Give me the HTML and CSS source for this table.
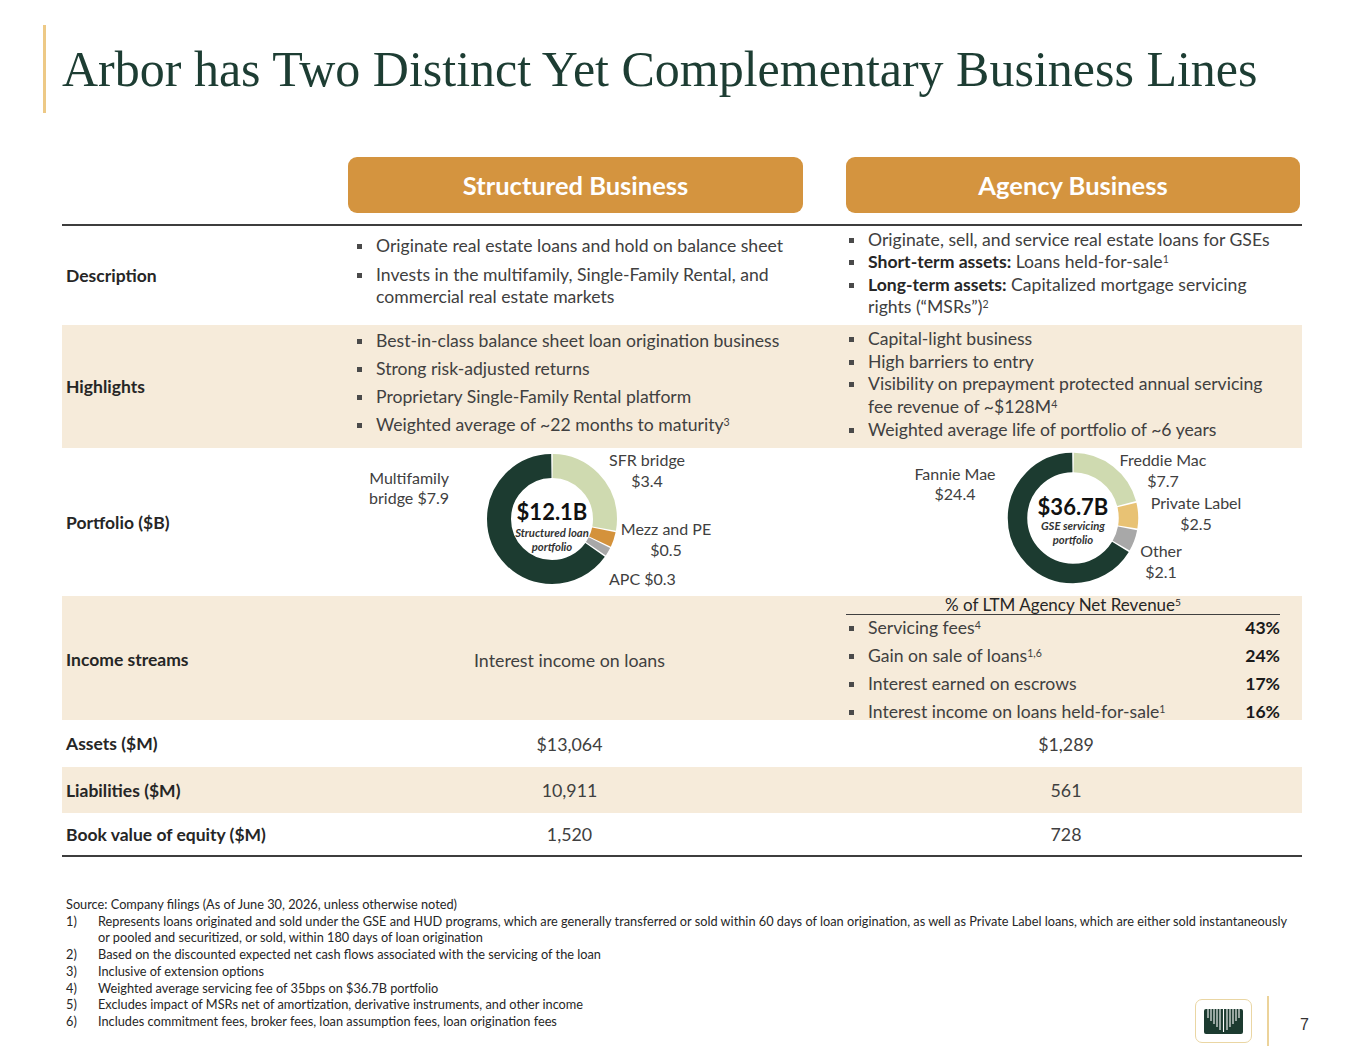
FILE: index.html
```html
<!DOCTYPE html>
<html lang="en">
<head>
<meta charset="utf-8">
<title>Arbor has Two Distinct Yet Complementary Business Lines</title>
<link rel="stylesheet" href="styles.css">
</head>
<body>
<div class="page">
  <header class="titlebar">
    <div class="accent"></div>
    <h1 class="title">Arbor has Two Distinct Yet Complementary Business Lines</h1>
  </header>

  <div class="pills">
    <div class="pill pill-a">Structured Business</div>
    <div class="pill pill-b">Agency Business</div>
  </div>

  <div class="table">
    <div class="row row-desc">
      <div class="label">Description</div>
      <ul class="list list-left spaced">
        <li>Originate real estate loans and hold on balance sheet</li>
        <li>Invests in the multifamily, Single-Family Rental, and commercial real estate markets</li>
      </ul>
      <ul class="list list-right">
        <li>Originate, sell, and service real estate loans for GSEs</li>
        <li><b>Short-term assets:</b> Loans held-for-sale<sup>1</sup></li>
        <li><b>Long-term assets:</b> Capitalized mortgage servicing rights (“MSRs”)<sup>2</sup></li>
      </ul>
    </div>

    <div class="row row-high shade">
      <div class="label">Highlights</div>
      <ul class="list list-left spaced2">
        <li>Best-in-class balance sheet loan origination business</li>
        <li>Strong risk-adjusted returns</li>
        <li>Proprietary Single-Family Rental platform</li>
        <li>Weighted average of ~22 months to maturity<sup>3</sup></li>
      </ul>
      <ul class="list list-right">
        <li>Capital-light business</li>
        <li>High barriers to entry</li>
        <li>Visibility on prepayment protected annual servicing fee revenue of ~$128M<sup>4</sup></li>
        <li>Weighted average life of portfolio of ~6 years</li>
      </ul>
    </div>

    <div class="row row-port">
      <div class="label">Portfolio ($B)</div>
      <div class="chart chart-left">
        <svg width="455" height="148" viewBox="0 0 455 148">
          <g transform="rotate(-90 204 71)" fill="none" stroke-width="24">
            <circle cx="204" cy="71" r="53" pathLength="100" stroke="#cfdab0" stroke-dasharray="27.7 72.3" stroke-dashoffset="-0.2"/>
            <circle cx="204" cy="71" r="53" pathLength="100" stroke="#d4923b" stroke-dasharray="3.7 96.3" stroke-dashoffset="-28.3"/>
            <circle cx="204" cy="71" r="53" pathLength="100" stroke="#a8a8a8" stroke-dasharray="2.1 97.9" stroke-dashoffset="-32.4"/>
            <circle cx="204" cy="71" r="53" pathLength="100" stroke="#1c3b30" stroke-dasharray="64.9 35.1" stroke-dashoffset="-34.9"/>
          </g>
          <text class="lbl" x="101" y="36" text-anchor="end">Multifamily</text>
          <text class="lbl" x="101" y="56" text-anchor="end">bridge $7.9</text>
          <text class="lbl" x="299" y="18" text-anchor="middle">SFR bridge</text>
          <text class="lbl" x="299" y="39" text-anchor="middle">$3.4</text>
          <text class="lbl" x="318" y="87" text-anchor="middle">Mezz and PE</text>
          <text class="lbl" x="318" y="108" text-anchor="middle">$0.5</text>
          <text class="lbl" x="261" y="137">APC $0.3</text>
          <text class="big" x="204" y="72" text-anchor="middle">$12.1B</text>
          <text class="cap" x="204" y="89" text-anchor="middle">Structured loan</text>
          <text class="cap" x="204" y="103" text-anchor="middle">portfolio</text>
        </svg>
      </div>
      <div class="chart chart-right">
        <svg width="454" height="148" viewBox="0 0 454 148">
          <g transform="rotate(-90 227 70)" fill="none" stroke-width="19.5">
            <circle cx="227" cy="70" r="55.5" pathLength="100" stroke="#cfdab0" stroke-dasharray="20.6 79.4" stroke-dashoffset="-0.2"/>
            <circle cx="227" cy="70" r="55.5" pathLength="100" stroke="#e8c274" stroke-dasharray="6.4 93.6" stroke-dashoffset="-21.2"/>
            <circle cx="227" cy="70" r="55.5" pathLength="100" stroke="#a8a8a8" stroke-dasharray="5.3 94.7" stroke-dashoffset="-28"/>
            <circle cx="227" cy="70" r="55.5" pathLength="100" stroke="#1c3b30" stroke-dasharray="66.1 33.9" stroke-dashoffset="-33.7"/>
          </g>
          <text class="lbl" x="109" y="32" text-anchor="middle">Fannie Mae</text>
          <text class="lbl" x="109" y="52" text-anchor="middle">$24.4</text>
          <text class="lbl" x="317" y="18" text-anchor="middle">Freddie Mac</text>
          <text class="lbl" x="317" y="39" text-anchor="middle">$7.7</text>
          <text class="lbl" x="350" y="61" text-anchor="middle">Private Label</text>
          <text class="lbl" x="350" y="82" text-anchor="middle">$2.5</text>
          <text class="lbl" x="315" y="109" text-anchor="middle">Other</text>
          <text class="lbl" x="315" y="130" text-anchor="middle">$2.1</text>
          <text class="big" x="227" y="67" text-anchor="middle">$36.7B</text>
          <text class="cap" x="227" y="82" text-anchor="middle">GSE servicing</text>
          <text class="cap" x="227" y="96" text-anchor="middle">portfolio</text>
        </svg>
      </div>
    </div>

    <div class="row row-inc shade">
      <div class="label">Income streams</div>
      <div class="value value-left">Interest income on loans</div>
      <div class="income">
        <div class="inc-head">% of LTM Agency Net Revenue<sup>5</sup></div>
        <ul class="list inc-list">
          <li><span>Servicing fees<sup>4</sup></span><b>43%</b></li>
          <li><span>Gain on sale of loans<sup>1,6</sup></span><b>24%</b></li>
          <li><span>Interest earned on escrows</span><b>17%</b></li>
          <li><span>Interest income on loans held-for-sale<sup>1</sup></span><b>16%</b></li>
        </ul>
      </div>
    </div>

    <div class="row row-small row-assets">
      <div class="label">Assets ($M)</div>
      <div class="value value-left">$13,064</div>
      <div class="value value-right">$1,289</div>
    </div>
    <div class="row row-small row-liab shade">
      <div class="label">Liabilities ($M)</div>
      <div class="value value-left">10,911</div>
      <div class="value value-right">561</div>
    </div>
    <div class="row row-small row-book">
      <div class="label">Book value of equity ($M)</div>
      <div class="value value-left">1,520</div>
      <div class="value value-right">728</div>
    </div>
  </div>

  <footer class="footer">
    <div class="notes">
      <p class="source">Source: Company filings (As of June 30, 2026, unless otherwise noted)</p>
      <ol class="fn">
        <li><span class="n">1)</span><span>Represents loans originated and sold under the GSE and HUD programs, which are generally transferred or sold within 60 days of loan origination, as well as Private Label loans, which are either sold instantaneously or pooled and securitized, or sold, within 180 days of loan origination</span></li>
        <li><span class="n">2)</span><span>Based on the discounted expected net cash flows associated with the servicing of the loan</span></li>
        <li><span class="n">3)</span><span>Inclusive of extension options</span></li>
        <li><span class="n">4)</span><span>Weighted average servicing fee of 35bps on $36.7B portfolio</span></li>
        <li><span class="n">5)</span><span>Excludes impact of MSRs net of amortization, derivative instruments, and other income</span></li>
        <li><span class="n">6)</span><span>Includes commitment fees, broker fees, loan assumption fees, loan origination fees</span></li>
      </ol>
    </div>
    <div class="brand">
      <div class="logo">
        <svg width="39" height="25" viewBox="0 0 39 25">
          <rect x="0" y="0" width="39" height="25" rx="2" fill="#1c3b30"/>
          <g stroke="#ffffff" stroke-width="1.1">
            <line x1="4" y1="0" x2="4" y2="9"/>
            <line x1="7" y1="0" x2="7" y2="12"/>
            <line x1="10" y1="0" x2="10" y2="15"/>
            <line x1="13" y1="0" x2="13" y2="18"/>
            <line x1="16" y1="0" x2="16" y2="21"/>
            <line x1="19.5" y1="0" x2="19.5" y2="23"/>
            <line x1="23" y1="0" x2="23" y2="21"/>
            <line x1="26" y1="0" x2="26" y2="18"/>
            <line x1="29" y1="0" x2="29" y2="15"/>
            <line x1="32" y1="0" x2="32" y2="12"/>
            <line x1="35" y1="0" x2="35" y2="9"/>
          </g>
        </svg>
      </div>
      <div class="divider"></div>
      <div class="pagenum">7</div>
    </div>
  </footer>
</div>
</body>
</html>
```

FILE: styles.css
```css
* { box-sizing: border-box; }
html, body { margin: 0; padding: 0; background: #ffffff; }
body {
  font-family: Lato, "Open Sans", "Liberation Sans", sans-serif;
  color: #404040;
}
.page {
  width: 1365px;
  height: 1055px;
  overflow: hidden;
  position: relative;
}

/* Title */
.titlebar {
  display: flex;
  align-items: flex-start;
  padding-top: 25px;
  padding-left: 43px;
}
.accent {
  width: 3px;
  height: 88px;
  background: #edc986;
  flex: none;
}
.title {
  margin: 0 0 0 16px;
  font-family: "Liberation Serif", "DejaVu Serif", serif;
  font-weight: normal;
  font-size: 50px;
  line-height: 88px;
  color: #1d3d33;
  white-space: nowrap;
}

/* Pills */
.pills,
.row {
  display: grid;
  grid-template-columns: 286px 455px 43px 456px;
}
.pills {
  margin: 44px 0 0 62px;
  width: 1240px;
}
.pill {
  height: 56px;
  border-radius: 9px;
  background: #d4943f;
  color: #ffffff;
  font-weight: bold;
  font-size: 25.5px;
  display: flex;
  align-items: center;
  justify-content: center;
}
.pill-a { grid-column: 2; }
.pill-b { grid-column: 4; width: 454px; }

/* Table */
.table {
  margin: 11px 0 0 62px;
  width: 1240px;
  border-top: 2px solid #3d3d3d;
  border-bottom: 2px solid #3d3d3d;
}
.row > :nth-child(3) { grid-column: 4; }
.shade { background: #f6ebda; }
.label {
  grid-column: 1;
  align-self: center;
  padding-left: 4px;
  font-weight: bold;
  font-size: 17.5px;
  color: #262626;
}
.row-desc { height: 99px; }
.row-high { height: 123px; }
.row-port { height: 148px; }
.row-inc { height: 124px; }
.row-assets { height: 47px; }
.row-liab { height: 46px; }
.row-book { height: 42px; }

.list {
  list-style: none;
  margin: 0;
  padding: 0;
  font-size: 17.6px;
  line-height: 22px;
}
.list li {
  position: relative;
  padding-left: 20px;
}
.list li::before {
  content: "";
  position: absolute;
  left: 1px;
  top: 9px;
  width: 5px;
  height: 5px;
  background: #4a4a4a;
}
.list b { color: #262626; }
sup { font-size: 0.6em; line-height: 0; vertical-align: 0.45em; }

.list-left { padding-left: 8px; padding-right: 6px; }
.list-right { padding-left: 2px; padding-right: 26px; }
.row-desc .list-left { padding-top: 9px; }
.row-desc .list-right { padding-top: 3px; line-height: 22.3px; }
.row-high .list-left { padding-top: 5px; }
.row-high .list-right { padding-top: 3px; line-height: 22.7px; }
.spaced li + li { margin-top: 7px; }
.spaced2 li + li { margin-top: 6px; }

/* Charts */
.chart svg { display: block; }
.lbl {
  font-family: Lato, "Open Sans", sans-serif;
  font-size: 16px;
  fill: #404040;
}
.big {
  font-family: Lato, "Open Sans", sans-serif;
  font-size: 22px;
  font-weight: bold;
  fill: #111111;
}
.cap {
  font-family: Lato, "Open Sans", sans-serif;
  font-size: 11.3px;
  font-weight: bold;
  font-style: italic;
  fill: #333333;
}

/* Income */
.value {
  align-self: center;
  text-align: center;
  font-size: 17.8px;
  color: #404040;
}
.value-left { padding-right: 12px; }
.value-right { padding-right: 14px; width: 454px; }
.income {
  padding-right: 22px;
}
.inc-head {
  text-align: center;
  font-size: 17px;
  line-height: 18px;
  border-bottom: 1px solid #404040;
  color: #262626;
}
.inc-list { margin-top: 2px; padding-left: 2px; }
.inc-list li {
  display: flex;
  justify-content: space-between;
}
.inc-list li + li { margin-top: 6px; }
.inc-list b { color: #1a1a1a; }

/* Footer */
.footer {
  display: grid;
  margin: 39px 0 0 66px;
  width: 1240px;
}
.notes,
.brand { grid-area: 1 / 1; }
.notes {
  font-size: 12.75px;
  line-height: 16.7px;
  color: #262626;
  padding-right: 6px;
}
.source { margin: 0; }
.fn { list-style: none; margin: 0; padding: 0; }
.fn li { display: flex; }
.fn .n { width: 32px; flex: none; }
.brand {
  justify-self: end;
  align-self: start;
  margin-top: 100px;
  display: flex;
  align-items: center;
  margin-right: -3px;
}
.logo {
  width: 57px;
  height: 44px;
  border: 1.5px solid #ead6a3;
  border-radius: 7px;
  display: flex;
  align-items: center;
  justify-content: center;
  background: #ffffff;
}
.divider {
  width: 2px;
  height: 50px;
  background: #ecd39a;
  margin-left: 15px;
}
.pagenum {
  width: 40px;
  text-align: right;
  font-size: 16px;
  color: #333333;
  font-family: "Liberation Sans", sans-serif;
  padding-top: 8px;
}
```
